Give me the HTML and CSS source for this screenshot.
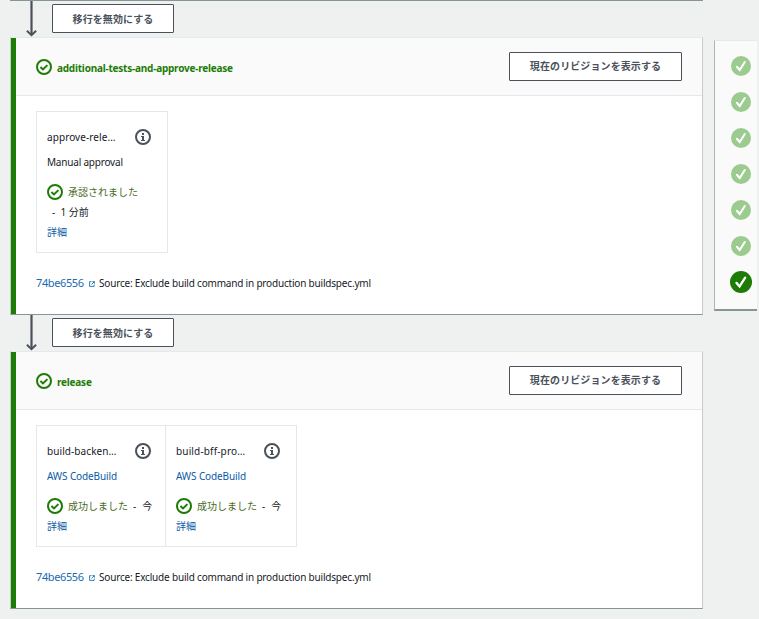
FILE: index.html
```html
<!DOCTYPE html>
<html lang="ja">
<head>
<meta charset="utf-8">
<title>Pipeline</title>
<link rel="stylesheet" href="styles.css">
</head>
<body>
<svg width="0" height="0" class="defs">
  <symbol id="ok" viewBox="0 0 16 16"><circle cx="8" cy="8" r="7" fill="none" stroke="#1d7c06" stroke-width="2"/><path d="M4.4 8l2.6 2.4 4.4-4.3" fill="none" stroke="#1d7c06" stroke-width="2"/></symbol>
  <symbol id="info" viewBox="0 0 16 16"><circle cx="8" cy="8" r="7" fill="none" stroke="#4a515b" stroke-width="2"/><path d="M7 4h2v2H7zM6 7h3v4h1v1H6v-1h1V8H6z" fill="#4a515b"/></symbol>
  <symbol id="ext" viewBox="0 0 6 6"><path d="M2.5.7H.6v4.7h4.6V3.6M3.4.6h2v2M5.2.8L2.6 3.4" fill="none" stroke="#1a73b5" stroke-width=".9"/></symbol>
  <symbol id="arrow" viewBox="0 0 12 36"><path d="M6.5 0v34" fill="none" stroke="#4a515b" stroke-width="2.2"/><path d="M1.9 29.8l4.6 4.4 4.6-4.4" fill="none" stroke="#4a515b" stroke-width="2"/></symbol>
  <symbol id="done" viewBox="0 0 20 20"><circle cx="10" cy="10" r="10" fill="currentColor"/><path d="M5.9 10.8l2.8 3.2 5.1-8" fill="none" stroke="#fff" stroke-width="2.1" stroke-linecap="round"/></symbol>
</svg>
<div class="page">
  <main class="pipeline">
    <div class="previous"></div>
    <div class="transition"><svg class="arrow"><use href="#arrow"/></svg><button class="btn">移行を無効にする</button></div>
    <section class="stage stage-approve">
      <header class="stage-head"><svg class="icon"><use href="#ok"/></svg><h2>additional-tests-and-approve-release</h2><button class="btn">現在のリビジョンを表示する</button></header>
      <div class="stage-body">
        <div class="actions">
          <article class="action tall">
            <div class="name"><span>approve-rele…</span><svg class="icon"><use href="#info"/></svg></div>
            <div class="provider manual">Manual approval</div>
            <div class="status"><svg class="icon"><use href="#ok"/></svg><span class="state">承認されました</span></div>
            <div class="when">-&nbsp; 1 分前</div>
            <a class="detail">詳細</a>
          </article>
        </div>
        <p class="revision"><a class="commit">74be6556</a><svg class="ext"><use href="#ext"/></svg><span class="message">Source: Exclude build command in production buildspec.yml</span></p>
      </div>
    </section>
    <div class="transition"><svg class="arrow"><use href="#arrow"/></svg><button class="btn">移行を無効にする</button></div>
    <section class="stage stage-release">
      <header class="stage-head"><svg class="icon"><use href="#ok"/></svg><h2>release</h2><button class="btn">現在のリビジョンを表示する</button></header>
      <div class="stage-body">
        <div class="actions">
          <article class="action">
            <div class="name"><span>build-backen…</span><svg class="icon"><use href="#info"/></svg></div>
            <a class="provider">AWS CodeBuild</a>
            <div class="status"><svg class="icon"><use href="#ok"/></svg><span class="state">成功しました</span><span class="dash">-</span><span>今</span></div>
            <a class="detail">詳細</a>
          </article>
          <article class="action">
            <div class="name"><span>build-bff-pro…</span><svg class="icon"><use href="#info"/></svg></div>
            <a class="provider">AWS CodeBuild</a>
            <div class="status"><svg class="icon"><use href="#ok"/></svg><span class="state">成功しました</span><span class="dash">-</span><span>今</span></div>
            <a class="detail">詳細</a>
          </article>
        </div>
        <p class="revision"><a class="commit">74be6556</a><svg class="ext"><use href="#ext"/></svg><span class="message">Source: Exclude build command in production buildspec.yml</span></p>
      </div>
    </section>
  </main>
  <aside class="progress">
    <svg><use href="#done"/></svg><svg><use href="#done"/></svg><svg><use href="#done"/></svg><svg><use href="#done"/></svg><svg><use href="#done"/></svg><svg><use href="#done"/></svg><svg class="current"><use href="#done"/></svg>
  </aside>
</div>
</body>
</html>
```
FILE: styles.css
```css
* { box-sizing: border-box; }
body {
  margin: 0;
  height: 619px;
  overflow: hidden;
  background: #eff1f1;
  color: #16191f;
  font: 10px/20px "Noto Sans", "Noto Sans CJK JP", sans-serif;
}
.defs { display: block; height: 0; }
.page { display: flex; align-items: flex-start; width: 759px; }
.pipeline { width: 693px; margin-left: 10px; flex: none; }
.previous { height: 1px; background: #879596; }
.transition { display: flex; height: 36px; padding-left: 15px; }
.arrow { width: 12px; height: 36px; flex: none; }
.btn {
  height: 29px;
  padding: 0;
  border: 1px solid #4a515b;
  border-radius: 1px;
  background: #fff;
  color: #4a515b;
  font: bold 10px/20px "Noto Sans CJK JP", sans-serif;
  letter-spacing: .1px;
}
.transition .btn { width: 122px; margin: 3px 0 0 15px; }
.stage {
  border: 1px solid #c5cccc;
  border-top-color: #e6e9e9;
  border-bottom-color: #879596;
  background: linear-gradient(to right, #1d7c06 5px, #fff 5px);
}
.stage-approve { height: 278px; }
.stage-release { height: 258px; }
.stage-head {
  display: flex;
  align-items: center;
  height: 58px;
  margin-left: 5px;
  padding: 0 20px;
  border-bottom: 1px solid #e6e9e9;
  background: #fafafa;
}
.stage-head h2 { margin: 2px auto 0 5px; color: #1d7c06; font-size: 10px; line-height: 20px; letter-spacing: -.22px; }
.stage-head .btn { width: 173px; padding-bottom: 2px; }
.icon { width: 16px; height: 16px; flex: none; }
.stage-head .icon { margin-top: 0; }
.stage-body { margin-left: 5px; padding: 15px 20px 0; }
.actions { display: flex; }
.action { width: 130px; height: 122px; padding: 15px 10px 0; border: 1px solid #e4e8e8; }
.action.tall { width: 132px; height: 142px; }
.action + .action { width: 132px; margin-left: -1px; }
.name { display: flex; justify-content: space-between; height: 20px; padding-right: 4px; letter-spacing: .08px; }
.action.tall .name { padding-right: 6px; }
.action + .action .name { padding-right: 6px; letter-spacing: .15px; }
.name .icon { margin-top: 2px; }
.provider, .detail { display: block; color: #0a5aa8; }
.provider { margin: 5px 0 10px; letter-spacing: -.12px; }
.manual { color: #16191f; letter-spacing: -.2px; }
.status { display: flex; align-items: center; height: 20px; }
.status .icon { margin-right: 5px; }
.state { color: #4b6b1b; }
.dash { margin: 0 6px 0 5px; }
.when { padding-left: 5px; }
.revision { display: flex; align-items: center; height: 20px; margin: 20px 0 0; white-space: nowrap; }
.commit { width: 48px; color: #1a6bb0; font-size: 11px; letter-spacing: -.38px; }
.ext { width: 6px; height: 6px; margin: 2px 4px 0 5px; }
.message { letter-spacing: -.19px; }
.progress {
  display: flex;
  flex-direction: column;
  align-items: center;
  flex: none;
  width: 43px;
  height: 271px;
  margin: 40px 0 0 11px;
  padding: 15px 0 0 10px;
  gap: 16px;
  border: 1px solid #aab7b8;
  border-top-color: #e6e9e9;
  border-right: 0;
  border-bottom: 2px solid #879596;
  background: #fafafa;
  color: #9bcb8e;
}
.progress svg { width: 20px; height: 20px; flex: none; }
.progress .current { width: 22px; height: 22px; margin-top: -1px; color: #1d7c06; }
```
